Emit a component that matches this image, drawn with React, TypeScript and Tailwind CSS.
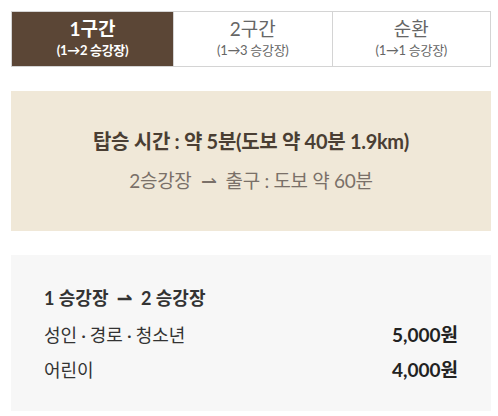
const font = { fontFamily: "Lato, 'Noto Sans CJK KR', sans-serif" };

const tabs = [
  { title: '1구간', sub: '(1→2 승강장)', active: true },
  { title: '2구간', sub: '(1→3 승강장)', active: false },
  { title: '순환', sub: '(1→1 승강장)', active: false },
];

export default function App() {
  return (
    <div className="w-[498px] h-[416px] bg-white pl-[11px] pr-[7px] pt-[11px]" style={font}>
      <div className="flex h-[56px] border border-[#d4d4d4]">
        {tabs.map((t, i) => (
          <div
            key={t.title}
            className={
              t.active
                ? 'w-[161px] flex flex-col items-center justify-center pb-[3px] bg-[#5b4636] text-white font-bold'
                : 'flex-1 flex flex-col items-center justify-center pb-[3px] text-[#666] ' + (i > 0 ? 'border-l border-[#d4d4d4]' : '')
            }
          >
            <div className="text-[19px] leading-[22px]">{t.title}</div>
            <div className="text-[13px] leading-[16px] mt-[2px] tracking-[-0.3px]">{t.sub}</div>
          </div>
        ))}
      </div>

      <div className="mt-[24px] h-[140px] bg-[#f0e8d8] flex flex-col items-center justify-center">
        <div className="text-[20px] font-bold text-[#4a3e33] leading-[28px] tracking-[-0.3px]">
          탑승 시간 : 약 5분(도보 약 40분 1.9km)
        </div>
        <div className="text-[19px] text-[#7a7068] leading-[28px] mt-[12px] tracking-[-0.3px]">
          2승강장 &nbsp;⇀&nbsp; 출구 : 도보 약 60분
        </div>
      </div>

      <div className="mt-[24px] h-[156px] bg-[#f7f7f7] pl-[33px] pr-[33px] pt-[30px]">
        <div className="text-[18px] font-bold text-[#333] leading-[26px]">1 승강장 &nbsp;⇀&nbsp; 2 승강장</div>
        <div className="flex justify-between text-[18px] text-[#333] leading-[26px] mt-[11px]">
          <span>
            성인<span className="mx-[4px]">·</span>경로<span className="mx-[4px]">·</span>청소년
          </span>
          <span className="font-bold text-[#222] text-[19px]">5,000원</span>
        </div>
        <div className="flex justify-between text-[18px] text-[#333] leading-[26px] mt-[9px]">
          <span>어린이</span>
          <span className="font-bold text-[#222] text-[19px]">4,000원</span>
        </div>
      </div>
    </div>
  );
}
